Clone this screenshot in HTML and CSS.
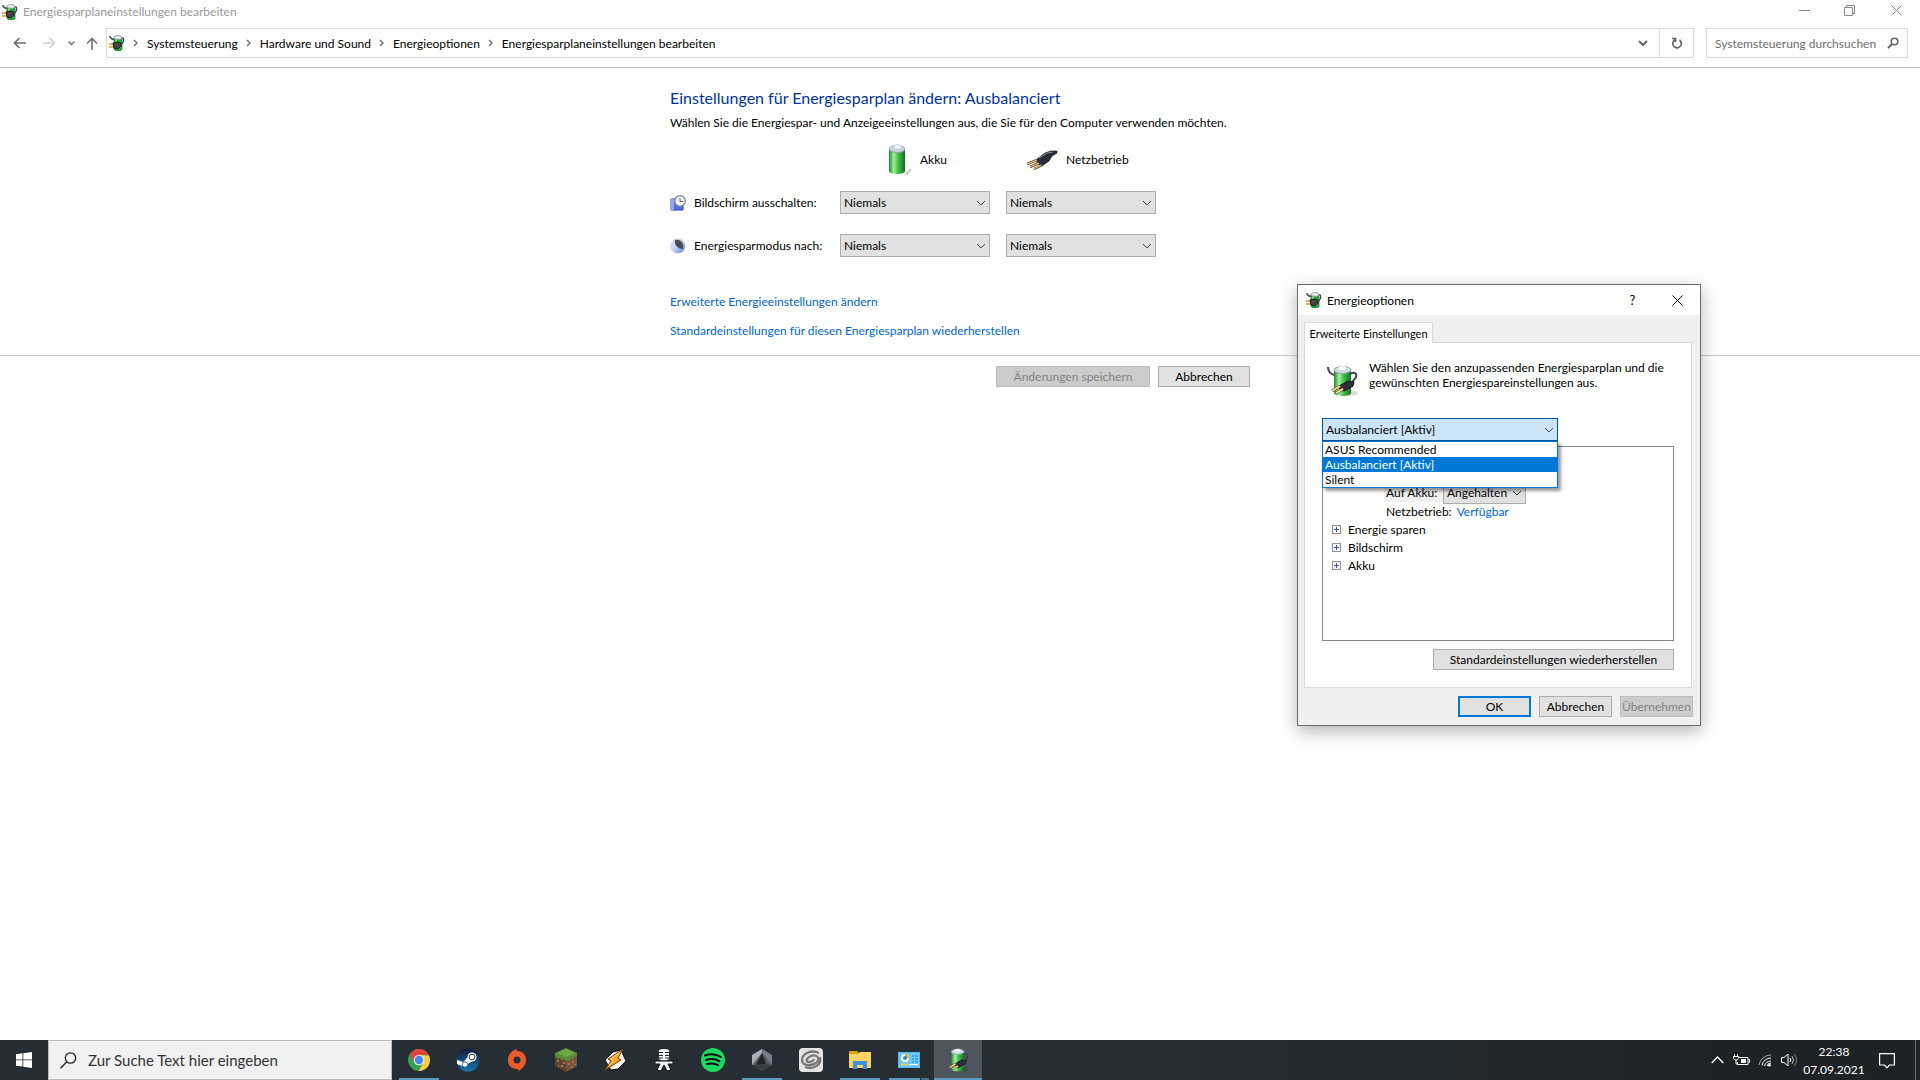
FILE: index.html
```
<!DOCTYPE html>
<html lang="de">
<head>
    <meta charset="UTF-8">
    <meta name="viewport" content="width=device-width, initial-scale=1.0">
    <title>Energiesparplaneinstellungen bearbeiten</title>
    <link rel="stylesheet" href="styles.css">
</head>
<body>
    <!-- Gemeinsame Symbole -->
    <svg class="sprite" aria-hidden="true">
        <defs>
            <linearGradient id="green" x1="0" x2="1" y1="0" y2="0">
                <stop offset="0" stop-color="#1c8a2c"/>
                <stop offset=".3" stop-color="#a5f0a0"/>
                <stop offset=".55" stop-color="#45c24d"/>
                <stop offset="1" stop-color="#157022"/>
            </linearGradient>
            <linearGradient id="moon" x1="0" x2="1" y1="0" y2="1">
                <stop offset="0" stop-color="#e8edf5"/>
                <stop offset=".5" stop-color="#c3d2ee"/>
                <stop offset="1" stop-color="#3f74d6"/>
            </linearGradient>
            <linearGradient id="steam-bg" x1="0" x2="0" y1="0" y2="1">
                <stop offset="0" stop-color="#101a38"/>
                <stop offset="1" stop-color="#1675b0"/>
            </linearGradient>
        </defs>
        <symbol id="i-power" viewBox="0 0 32 32">
            <ellipse cx="21" cy="28" rx="10" ry="3" fill="#000" opacity=".15"/>
            <path d="M23 9c5-3 7 0 6 3s-5 4-5 9" fill="none" stroke="#3b3b58" stroke-width="2"/>
            <path d="M1 2c0 5 3 7 6 8" fill="none" stroke="#4a4a60" stroke-width="2"/>
            <path d="M7 5v23c0 4 17 4 17 0V5z" fill="url(#green)"/>
            <ellipse cx="15.500" cy="5" rx="8.500" ry="3.500" fill="#cfdde4" stroke="#8ba0a8"/>
            <ellipse cx="15.500" cy="3" rx="4" ry="2" fill="#f5f8fb"/>
            <path d="M12 21l9-5 6 1-1 4-9 5-4-1z" fill="#2d2f3a" stroke="#14151c"/>
            <path d="M13 21l-8 5M16 24l-7 4" stroke="#7b5a25" stroke-width="3"/>
            <path d="M13 21l-8 5M16 24l-7 4" stroke="#f3dfa6" stroke-width="1.500"/>
        </symbol>
        <symbol id="i-power-small" viewBox="0 0 16 16">
            <path d="M11 3c4-1 4 1 3.500 3.500L12 10" fill="none" stroke="#44495a" stroke-width="1.300"/>
            <path d="M1 1c0 2 1 3 4 3.500" fill="none" stroke="#444" stroke-width="1.500"/>
            <path d="M5 3v11c0 2.500 8 2.500 8 0V3z" fill="#1fae35" stroke="#126b24" stroke-width=".7"/>
            <path d="M7 4v4" stroke="#90ee90" stroke-width="1.500"/>
            <ellipse cx="9" cy="2.500" rx="4" ry="2" fill="#e6ecf2" stroke="#7d8990" stroke-width=".8"/>
            <path d="M0 9h4M0 12h4" stroke="#e0a10c" stroke-width="1.500"/>
            <path d="M4 8l4-1 4 1v3l-3 3-4-1z" fill="#454545" stroke="#1a1a1a"/>
        </symbol>
        <symbol id="i-chevron" viewBox="0 0 10 6">
            <path d="M1 1l4 4 4-4" fill="none" stroke="currentColor"/>
        </symbol>
        <symbol id="i-crumb" viewBox="0 0 6 8">
            <path d="M1 1l3 3-3 3" fill="none" stroke="currentColor" stroke-width="1.500"/>
        </symbol>
        <symbol id="i-close" viewBox="0 0 11 11">
            <path d="M.5.5l10 10M10.500.5l-10 10" stroke="currentColor" fill="none"/>
        </symbol>
    </svg>

    <!-- Titelleiste -->
    <header class="titlebar">
        <svg class="icon16"><use href="#i-power-small"/></svg>
        <h1 class="window-title">Energiesparplaneinstellungen bearbeiten</h1>
        <div class="window-controls">
            <button class="control" aria-label="Minimieren"><svg width="11" height="11"><path d="M0 5.500h11" stroke="currentColor"/></svg></button>
            <button class="control" aria-label="Verkleinern"><svg width="11" height="11" fill="none" stroke="currentColor"><path d="M.5 2.500h8v8h-8zM2.500 2.500v-2h8v8h-2"/></svg></button>
            <button class="control" aria-label="Schließen"><svg width="11" height="11"><use href="#i-close"/></svg></button>
        </div>
    </header>

    <!-- Navigation -->
    <nav class="navbar">
        <div class="nav-buttons">
            <button class="nav-btn" aria-label="Zurück"><svg width="13" height="12" fill="none" stroke="#6b6b6b" stroke-width="1.700"><path d="M13 6H1.500M6.500 1l-5 5 5 5"/></svg></button>
            <button class="nav-btn" aria-label="Vorwärts" disabled><svg width="13" height="12" fill="none" stroke="#d4d4d4" stroke-width="1.700"><path d="M0 6h11.500M6.500 1l5 5-5 5"/></svg></button>
            <button class="nav-btn nav-history" aria-label="Verlauf"><svg width="7" height="5" fill="none" stroke="#777" stroke-width="1.500"><path d="M.5.5l3 3 3-3"/></svg></button>
            <button class="nav-btn nav-up" aria-label="Nach oben"><svg width="12" height="13" fill="none" stroke="#777" stroke-width="1.700"><path d="M6 13V1.500M1 6.500l5-5 5 5"/></svg></button>
        </div>
        <div class="address">
            <svg class="icon16"><use href="#i-power-small"/></svg>
            <svg class="crumb-arrow"><use href="#i-crumb"/></svg>
            <a href="#" class="crumb">Systemsteuerung</a>
            <svg class="crumb-arrow"><use href="#i-crumb"/></svg>
            <a href="#" class="crumb">Hardware und Sound</a>
            <svg class="crumb-arrow"><use href="#i-crumb"/></svg>
            <a href="#" class="crumb">Energieoptionen</a>
            <svg class="crumb-arrow"><use href="#i-crumb"/></svg>
            <a href="#" class="crumb">Energiesparplaneinstellungen bearbeiten</a>
            <button class="address-btn address-drop" aria-label="Vorherige Orte"><svg width="10" height="7" fill="none" stroke="#666" stroke-width="2"><path d="M1 1l4 4 4-4"/></svg></button>
            <button class="address-btn address-reload" aria-label="Aktualisieren"><svg width="12" height="12" fill="none" stroke="#666" stroke-width="1.700"><path d="M8.500 3A4.300 4.300 0 1 1 4 2.700M1 1.500h3.500v3.500"/></svg></button>
        </div>
        <div class="search">
            <input type="text" class="search-input" placeholder="Systemsteuerung durchsuchen" aria-label="Systemsteuerung durchsuchen">
            <svg width="12" height="12" fill="none" stroke="#666"><circle cx="7.500" cy="4.500" r="3.300" stroke-width="1.600"/><path d="M5 7l-4 4" stroke-width="2"/></svg>
        </div>
    </nav>

    <main class="content">
        <section class="plan">
            <h2 class="plan-title">Einstellungen für Energiesparplan ändern: Ausbalanciert</h2>
            <p class="plan-text">Wählen Sie die Energiespar- und Anzeigeeinstellungen aus, die Sie für den Computer verwenden möchten.</p>

            <div class="plan-grid">
                <div class="source source-battery">
                    <svg width="24" height="32" viewBox="0 0 24 32">
                        <path d="M16 30l7-6v3l-4 4z" fill="#000" opacity=".2"/>
                        <path d="M1 5v22c0 4 16 4 16 0V5z" fill="url(#green)"/>
                        <ellipse cx="9" cy="5" rx="8" ry="3.500" fill="#c8d3dc" stroke="#8b9aa3" stroke-width=".8"/>
                        <ellipse cx="9.500" cy="3" rx="4" ry="2.500" fill="#eef2f9" stroke="#a9b3c2" stroke-width=".5"/>
                    </svg>
                    <span>Akku</span>
                </div>
                <div class="source source-plug">
                    <svg width="32" height="20" viewBox="0 0 32 20">
                        <path d="M11 9l8-6 6-2 6 0v2l-5 3-3 5-7 5-5-3z" fill="#2b2d36" stroke="#17181e" stroke-width=".7"/>
                        <path d="M13 8l8-5 6-1" stroke="#8b8f9c" fill="none"/>
                        <path d="M11 10L1 14M13 13L4 17M16 15l-8 4" stroke="#6d4d26" stroke-width="2.500"/>
                        <path d="M11 10L1 14M13 13L4 17M15 15l-7 4" stroke="#efd49e"/>
                    </svg>
                    <span>Netzbetrieb</span>
                </div>

                <div class="setting">
                    <svg class="icon16" viewBox="0 0 16 16">
                        <path d="M1 4h12v11H1z" fill="#5370e0" stroke="#2c40b0"/>
                        <path d="M1 4h3v11H1z" fill="#92a8f4"/>
                        <circle cx="10" cy="6" r="5.300" fill="#f2f4f6" stroke="#7d858c" stroke-width="1.300"/>
                        <path d="M10 3v3.500h3" stroke="#4b5560" fill="none"/>
                    </svg>
                    <span>Bildschirm ausschalten:</span>
                </div>
                <div class="select">
                    <select aria-label="Bildschirm ausschalten, Akku"><option>Niemals</option></select>
                    <svg class="select-arrow"><use href="#i-chevron"/></svg>
                </div>
                <div class="select">
                    <select aria-label="Bildschirm ausschalten, Netzbetrieb"><option>Niemals</option></select>
                    <svg class="select-arrow"><use href="#i-chevron"/></svg>
                </div>

                <div class="setting">
                    <svg class="icon16" viewBox="0 0 16 16">
                        <circle cx="8" cy="8" r="7.300" fill="url(#moon)" stroke="#c5ccd8" stroke-width=".6"/>
                        <path d="M5 2c6-1 9 3 8 9C8 11 4 7 5 2z" fill="#474c58"/>
                    </svg>
                    <span>Energiesparmodus nach:</span>
                </div>
                <div class="select">
                    <select aria-label="Energiesparmodus nach, Akku"><option>Niemals</option></select>
                    <svg class="select-arrow"><use href="#i-chevron"/></svg>
                </div>
                <div class="select">
                    <select aria-label="Energiesparmodus nach, Netzbetrieb"><option>Niemals</option></select>
                    <svg class="select-arrow"><use href="#i-chevron"/></svg>
                </div>
            </div>

            <div class="plan-links">
                <a href="#">Erweiterte Energieeinstellungen ändern</a>
                <a href="#">Standardeinstellungen für diesen Energiesparplan wiederherstellen</a>
            </div>
        </section>

        <div class="actions">
            <div class="actions-inner">
                <button class="btn btn-save" disabled>Änderungen speichern</button>
                <button class="btn btn-cancel">Abbrechen</button>
            </div>
        </div>
    </main>

    <!-- Dialog Energieoptionen -->
    <div class="dialog" role="dialog" aria-labelledby="dialog-title">
        <div class="dialog-bar">
            <svg class="icon16"><use href="#i-power-small"/></svg>
            <h2 class="dialog-title" id="dialog-title">Energieoptionen</h2>
            <button class="dialog-control" aria-label="Hilfe">?</button>
            <button class="dialog-control" aria-label="Dialog schließen"><svg width="11" height="11"><use href="#i-close"/></svg></button>
        </div>
        <div class="dialog-body">
            <button class="tab">Erweiterte Einstellungen</button>
            <div class="panel">
                <div class="intro">
                    <svg width="32" height="32"><use href="#i-power"/></svg>
                    <p>Wählen Sie den anzupassenden Energiesparplan und die gewünschten Energiespareinstellungen aus.</p>
                </div>
                <div class="select combo">
                    <select aria-label="Energiesparplan"><option>Ausbalanciert [Aktiv]</option></select>
                    <svg class="select-arrow"><use href="#i-chevron"/></svg>
                    <ul class="combo-list" role="listbox">
                        <li role="option">ASUS Recommended</li>
                        <li role="option" class="selected" aria-selected="true">Ausbalanciert [Aktiv]</li>
                        <li role="option">Silent</li>
                    </ul>
                </div>
                <div class="tree">
                    <div class="tree-value">
                        <label class="tree-label" for="on-battery">Auf Akku:</label>
                        <div class="select select-small">
                            <select id="on-battery"><option>Angehalten</option></select>
                            <svg class="select-arrow"><use href="#i-chevron"/></svg>
                        </div>
                    </div>
                    <div class="tree-value tree-mains">Netzbetrieb: <a href="#">Verfügbar</a></div>
                    <ul class="tree-list">
                        <li><button class="expander" aria-label="Energie sparen aufklappen"></button>Energie sparen</li>
                        <li><button class="expander" aria-label="Bildschirm aufklappen"></button>Bildschirm</li>
                        <li><button class="expander" aria-label="Akku aufklappen"></button>Akku</li>
                    </ul>
                </div>
                <button class="btn btn-restore">Standardeinstellungen wiederherstellen</button>
            </div>
            <div class="dialog-actions">
                <button class="btn btn-default">OK</button>
                <button class="btn">Abbrechen</button>
                <button class="btn" disabled>Übernehmen</button>
            </div>
        </div>
    </div>

    <!-- Taskleiste -->
    <footer class="taskbar">
        <button class="start" aria-label="Start"><svg width="16" height="16" fill="#fff"><path d="M0 2.200L6.500 1.300v6.200H0zM7.300 1.200L16 0v7.500H7.300zM0 8.300h6.500v6.300L0 13.700zM7.300 8.300H16V16l-8.700-1.200z"/></svg></button>
        <div class="task-search">
            <svg width="17" height="17" fill="none" stroke="#222" stroke-width="1.300"><circle cx="10.500" cy="6" r="5.200"/><path d="M6.800 9.700L.5 16.300"/></svg>
            <input type="text" placeholder="Zur Suche Text hier eingeben" aria-label="Suche">
        </div>
        <div class="apps">
            <button class="app running" aria-label="Chrome">
                <svg width="24" height="24" viewBox="0 0 24 24"><circle cx="12" cy="12" r="11" fill="#34a053"/><path d="M2.500 6.500A11 11 0 0 1 21.500 6.500L22 7H12L7.700 14.500z" fill="#dc4437"/><path d="M22 7.500A11 11 0 0 1 11.500 23l5-8.500L12 7z" fill="#fdcb3e"/><circle cx="12" cy="12" r="5.300" fill="#f1f1f1"/><circle cx="12" cy="12" r="4.200" fill="#4487f4"/></svg>
            </button>
            <button class="app" aria-label="Steam">
                <svg width="24" height="24" viewBox="0 0 24 24"><circle cx="12" cy="12" r="11.500" fill="url(#steam-bg)"/><path d="M1 12l6 2 5-5 4 4-4 3-3 3-8-3z" fill="#fff"/><circle cx="16" cy="9" r="4.500" fill="#fff"/><circle cx="16" cy="9" r="2.900" fill="#fff" stroke="#234" stroke-width="1"/><circle cx="9" cy="16.500" r="2.700" fill="#fff" stroke="#1b4676" stroke-width=".8"/></svg>
            </button>
            <button class="app" aria-label="Origin">
                <svg width="24" height="24" viewBox="0 0 24 24"><path d="M13 0c-2 1-2 2-1 3 6 0 9 4 9 9 0 6-5 9-8 12 1-2 1-3-1-3-6 0-9-4-9-9 0-6 4-9 10-12zm-1 8.500a3.500 3.500 0 1 0 0 7 3.500 3.500 0 0 0 0-7z" fill="#ea5b2b" fill-rule="evenodd"/></svg>
            </button>
            <button class="app" aria-label="Minecraft">
                <svg width="24" height="24" viewBox="0 0 24 24"><path d="M1 5l11-5 11 5v13l-11 6-11-6z" fill="#60432d"/><path d="M12 11l11-6v13l-11 6z" fill="#7a5337"/><path d="M1 5l11-5 11 5v3l-3 1v2l-3-1v2l-5 1-3-2v2l-3-3-2 1-3-3z" fill="#568c36"/><path d="M3 5l9-4 9 4-9 4z" fill="#70a849"/><path d="M3 12h2v2H3zM7 17h2v2H7zM4 17h1v2H4zM9 14h2v2H9zM14 15h2v2h-2zM18 13h2v2h-2zM17 18h2v2h-2zM20 16h2v1h-2z" fill="#a77950"/></svg>
            </button>
            <button class="app" aria-label="Winamp">
                <svg width="24" height="24" viewBox="0 0 24 24"><path d="M10 4l8-2 5 11-8 8-7 1-6-10z" fill="#f5f5f5" stroke="#111"/><path d="M20 1L5 11l3 2-6 9 16-10-3-2z" fill="#f9a22b" stroke="#7a3c05"/><path d="M16 5L8 11l3 1-5 6" stroke="#ffe0a0" fill="none"/></svg>
            </button>
            <button class="app" aria-label="Mikrofon">
                <svg width="24" height="24" viewBox="0 0 24 24"><path d="M7 2q5-2 10 0v9q-5 3-10 0z" fill="#fff"/><path d="M7 4.500h4M13 4.500h4M7 7.500h4M13 7.500h4M7 10h4M13 10h4" stroke="#222b30"/><path d="M3 13h18v3h-5l3 6-4 1-3-6-3 6-4-1 3-6H3z" fill="#f2f2f2" stroke="#111"/></svg>
            </button>
            <button class="app" aria-label="Spotify">
                <svg width="24" height="24" viewBox="0 0 24 24"><circle cx="12" cy="12" r="12" fill="#1ed760"/><path d="M4 7.500c6-2 12-1 16 1.500M5 12c5-1.500 10-1 13.500 1.300M6 16c4-1 8-.7 11 1.200" fill="none" stroke="#111" stroke-width="2" stroke-linecap="round"/></svg>
            </button>
            <button class="app running" aria-label="Polygon">
                <svg width="24" height="24" viewBox="0 0 24 24"><path d="M12 1l10 6v10l-10 6-10-6V7z" fill="#555b65"/><path d="M12 1L2 7v10l10-12z" fill="#a9adb5"/><path d="M12 1l10 6v10l-9-11z" fill="#777c86"/><path d="M12 5L6 17l10-1z" fill="#20252b"/><path d="M2 17l4 0 10-1 6 1-10 6z" fill="#3b4049"/></svg>
            </button>
            <button class="app" aria-label="Spirale">
                <svg width="24" height="24" viewBox="0 0 24 24"><rect width="24" height="24" rx="4" fill="#e4e4e4"/><path d="M20 5C12 1 3 6 3 12c0 6 10 7 15 2 4-4-1-8-6-6s-6 6-2 6 5-3 5-3M21 9c2 8-7 13-15 10" fill="none" stroke="#777" stroke-width="2.300"/></svg>
            </button>
            <button class="app running" aria-label="Explorer">
                <svg width="24" height="24" viewBox="0 0 24 24"><path d="M1 3h8l2 2h12v15H1z" fill="#dba20b"/><path d="M1 6h9l2-2h11v16H1z" fill="#fcd462"/><path d="M5 13h14v8h-4v-4H9v4H5z" fill="#3d93db"/></svg>
            </button>
            <button class="app running grouped" aria-label="Systemsteuerung">
                <svg width="24" height="24" viewBox="0 0 24 24"><rect x="1.500" y="4.500" width="21" height="15" fill="#6fc8f4" stroke="#5cb8ea"/><circle cx="8" cy="10" r="4" fill="#fff"/><path d="M8 6v4h4A4 4 0 0 0 8 6z" fill="#f4a52a"/><circle cx="8" cy="10" r="2" fill="#2b8bd3"/><path d="M15 8h2M18 8h3M15 11h2M18 11h3M15 14h2M18 14h3" stroke="#2583c4"/><path d="M4 16.500h7" stroke="#f4d53a" stroke-width="1.500"/><path d="M12 16.500h9" stroke="#fff"/></svg>
            </button>
            <button class="app running active" aria-label="Energieoptionen">
                <svg width="24" height="24"><use href="#i-power"/></svg>
            </button>
        </div>
        <div class="tray">
            <button class="tray-btn" aria-label="Ausgeblendete Symbole"><svg width="13" height="8" fill="none" stroke="#fff" stroke-width="1.300"><path d="M.7 7l5.800-6 5.800 6"/></svg></button>
            <button class="tray-btn" aria-label="Akkustand"><svg width="17" height="14" fill="none" stroke="#fff"><path d="M6 4.500h9v7H4.500V9M15.500 6.500h1v3h-1M1.500 1v2M4.500 1v2M.5 3.500h5v2l-1.500 1.500h-2L.5 5.500zM3 7v4h2"/><path d="M8 6h5v4H8z" fill="#fff" stroke="none"/></svg></button>
            <button class="tray-btn" aria-label="WLAN"><svg width="14" height="14" fill="none" stroke="#fff"><path d="M1 12A12 12 0 0 1 13 2" opacity=".6"/><path d="M4 12.500A9 9 0 0 1 13 5M6.500 13A7 7 0 0 1 13 8M9 13a4 4 0 0 1 4-3"/><circle cx="11.500" cy="12.200" r="1.300" fill="#fff" stroke="none"/></svg></button>
            <button class="tray-btn" aria-label="Lautstärke"><svg width="17" height="14" fill="none" stroke="#fff"><path d="M.5 4.500h2.500l4-3.500v12l-4-3.500H.5z"/><path d="M9 5q1.500 2 0 4"/><path d="M11 3q3 4 0 8" opacity=".7"/><path d="M13.500 1q4 6 0 12" opacity=".4"/></svg></button>
            <div class="clock"><span>22:38</span><span>07.09.2021</span></div>
            <button class="tray-btn notify" aria-label="Benachrichtigungen"><svg width="16" height="16" fill="none" stroke="#fff" stroke-width="1.200"><path d="M.6.6h14.800v11.400h-5L8 14.800 5.500 12H.6z"/></svg></button>
            <div class="show-desktop"></div>
        </div>
    </footer>
</body>
</html>
```
FILE: styles.css
```
:root {
    --text: #000;
    --link: #0066cc;
    --accent: #0078d7;
    --control-bg: #e1e1e1;
    --control-border: #adadad;
    --line: #d9d9d9;
}

* {
    margin: 0;
    padding: 0;
    box-sizing: border-box;
}

body {
    display: flex;
    flex-direction: column;
    min-height: 100vh;
    font-family: "Segoe UI", Lato, "Open Sans", sans-serif;
    font-size: 12px;
    line-height: 15px;
    color: var(--text);
    background: #fff;
}

button,
input,
select {
    font: inherit;
    color: inherit;
    border: none;
    background: none;
}

a {
    color: var(--link);
    text-decoration: none;
}

ul {
    list-style: none;
}

svg {
    display: block;
    flex-shrink: 0;
}

.sprite {
    position: absolute;
    width: 0;
    height: 0;
}

.icon16 {
    width: 16px;
    height: 16px;
}

/* Titelleiste */
.titlebar {
    display: flex;
    align-items: center;
    gap: 5px;
    height: 23px;
    padding-left: 2px;
}

.window-title {
    font-size: 12px;
    font-weight: 400;
    color: #999;
}

.window-controls {
    display: flex;
    align-self: flex-start;
    margin-left: auto;
}

.control {
    display: flex;
    align-items: center;
    justify-content: center;
    width: 45px;
    height: 20px;
    color: #888;
}

.control:last-child {
    width: 48px;
}

/* Navigation */
.navbar {
    display: flex;
    align-items: center;
    height: 45px;
    padding: 0 12px 4px 7px;
    border-bottom: 1px solid #bcbfbf;
}

.nav-buttons {
    display: flex;
    align-items: center;
    width: 99px;
}

.nav-btn {
    display: flex;
    align-items: center;
    justify-content: center;
    width: 24px;
    height: 24px;
}

.nav-btn + .nav-btn {
    margin-left: 6px;
}

.nav-btn + .nav-history {
    width: 12px;
    margin-left: 4px;
}

.nav-btn + .nav-up {
    margin-left: 3px;
}

.address {
    display: flex;
    flex: 1;
    align-items: center;
    height: 30px;
    padding-left: 2px;
    border: 1px solid var(--line);
}

.crumb-arrow {
    width: 6px;
    height: 8px;
    margin: 0 8px;
    color: #777;
}

.crumb {
    color: var(--text);
}

.address-btn {
    display: flex;
    align-items: center;
    justify-content: center;
    width: 32px;
    height: 28px;
}

.address-drop {
    margin-left: auto;
}

.address-reload {
    width: 34px;
    border-left: 1px solid var(--line);
}

.search {
    display: flex;
    align-items: center;
    width: 202px;
    height: 30px;
    margin-left: 12px;
    padding: 0 8px;
    border: 1px solid var(--line);
}

.search-input {
    flex: 1;
    min-width: 0;
}

.search-input::placeholder {
    color: #6d6d6d;
}

/* Inhalt */
.content {
    flex: 1;
}

.plan {
    max-width: 580px;
    margin: 0 auto;
    padding: 20px 0 17px;
}

.plan-title {
    font-size: 16px;
    font-weight: 400;
    line-height: 20px;
    color: #003399;
}

.plan-text {
    margin-top: 7px;
    white-space: nowrap;
}

.plan-grid {
    display: grid;
    grid-template-columns: 154px 150px 150px;
    grid-template-rows: 23px 23px 23px;
    gap: 20px 16px;
    align-items: center;
    margin-top: 18px;
}

.source {
    display: flex;
    align-items: center;
    gap: 8px;
}

.source-battery {
    grid-column: 2;
    padding-left: 48px;
}

.source-plug {
    padding-left: 20px;
}

.setting {
    display: flex;
    align-items: center;
    gap: 8px;
    white-space: nowrap;
}

.select {
    position: relative;
}

.select select {
    width: 100%;
    height: 23px;
    padding: 0 16px 0 3px;
    border: 1px solid var(--control-border);
    background: var(--control-bg);
    appearance: none;
}

.select-arrow {
    position: absolute;
    top: 9px;
    right: 4px;
    width: 10px;
    height: 6px;
    color: #444;
    pointer-events: none;
}

.plan-links {
    display: grid;
    gap: 14px;
    margin-top: 37px;
}

.actions {
    padding-top: 10px;
    border-top: 1px solid #ccc;
}

.actions-inner {
    display: flex;
    justify-content: flex-end;
    gap: 8px;
    max-width: 580px;
    margin: 0 auto;
}

.btn {
    height: 21px;
    border: 1px solid var(--control-border);
    background: var(--control-bg);
    white-space: nowrap;
}

.btn:disabled {
    color: #838383;
    border-color: #bfbfbf;
    background: #ccc;
}

.btn-save {
    width: 154px;
}

.btn-cancel {
    width: 92px;
}

/* Dialog */
.dialog {
    position: absolute;
    top: 284px;
    left: 1297px;
    width: 404px;
    border: 1px solid #6b6b6b;
    background: #f0f0f0;
    box-shadow: 0 5px 16px rgba(0, 0, 0, 0.3);
}

.dialog-bar {
    display: flex;
    align-items: center;
    height: 30px;
    padding-left: 8px;
    background: #fff;
}

.dialog-title {
    flex: 1;
    margin-left: 5px;
    font-size: 12px;
    font-weight: 400;
}

.dialog-control {
    display: flex;
    align-items: center;
    justify-content: center;
    width: 45px;
    height: 30px;
    font-size: 13px;
}

.dialog-body {
    padding: 7px 7px 8px 6px;
}

.tab {
    position: relative;
    z-index: 1;
    display: block;
    width: 129px;
    height: 21px;
    border: 1px solid var(--line);
    border-bottom: none;
    background: #fff;
    font-size: 11px;
    white-space: nowrap;
}

.panel {
    margin: -1px 1px 0 0;
    padding: 17px;
    border: 1px solid var(--line);
    background: #fff;
}

.intro {
    display: flex;
    gap: 10px;
    padding-left: 5px;
}

.intro svg {
    margin-top: 5px;
}

.combo {
    width: 236px;
    margin-top: 21px;
}

.combo select {
    border-color: #005499;
    background: #cce4f7;
}

.combo-list {
    position: absolute;
    z-index: 2;
    top: 23px;
    left: 0;
    width: 236px;
    border: 1px solid var(--accent);
    background: #fff;
    box-shadow: 3px 3px 3px rgba(0, 0, 0, 0.4);
}

.combo-list li {
    padding: 0 2px;
}

.combo-list .selected {
    color: #fff;
    background: var(--accent);
}

.tree {
    height: 195px;
    margin-top: 5px;
    padding: 34px 8px 0;
    border: 1px solid #828790;
}

.tree-value {
    display: flex;
    padding-left: 53px;
}

.tree-label {
    width: 59px;
    height: 21px;
    padding: 4px 2px 0;
    background: #f0f0f0;
}

.select-small {
    width: 83px;
}

.tree-mains {
    gap: 5px;
    padding-left: 55px;
}

.tree-list {
    margin-top: 1px;
}

.tree-list li {
    display: flex;
    align-items: center;
    gap: 7px;
    height: 18px;
    padding-left: 1px;
}

.expander {
    width: 9px;
    height: 9px;
    border: 1px solid #919191;
    background:
        linear-gradient(#3a55a4, #3a55a4) center / 5px 1px no-repeat,
        linear-gradient(#3a55a4, #3a55a4) center / 1px 5px no-repeat,
        #f4f4f4;
}

.btn-restore {
    display: block;
    width: 241px;
    margin: 8px 0 0 auto;
}

.dialog-actions {
    display: flex;
    justify-content: flex-end;
    gap: 8px;
    margin-top: 8px;
}

.dialog-actions .btn {
    width: 73px;
}

.dialog-actions .btn-default {
    border: 2px solid var(--accent);
}

/* Taskleiste */
.taskbar {
    display: flex;
    height: 40px;
    color: #fff;
    background: linear-gradient(90deg, #252d34, #262e34 60%, #1d2225 90%);
}

.start {
    display: flex;
    align-items: center;
    justify-content: center;
    width: 48px;
}

.task-search {
    display: flex;
    align-items: center;
    gap: 11px;
    width: 344px;
    padding: 0 11px;
    border: 1px solid #bbb;
    background: #f1f1f1;
}

.task-search input {
    flex: 1;
    font-size: 15px;
}

.task-search input::placeholder {
    color: #333;
}

.apps {
    display: flex;
    gap: 1px;
    margin-left: 3px;
}

.app {
    display: flex;
    align-items: center;
    justify-content: center;
    width: 48px;
    background: linear-gradient(#5b9abf, #5b9abf) bottom / 0 2px no-repeat;
}

.app.running {
    background-size: 40px 2px;
}

.app.grouped {
    background: linear-gradient(90deg, #5b9abf 31px, #222 31px, #222 32px, #45708b 32px) bottom / 40px 2px no-repeat;
}

.app.active {
    background-color: #50575c;
    background-size: 48px 2px;
}

.tray {
    display: flex;
    align-items: center;
    margin-left: auto;
}

.tray-btn {
    display: flex;
    align-items: center;
    justify-content: center;
    width: 24px;
    height: 40px;
}

.clock {
    display: flex;
    flex-direction: column;
    align-items: center;
    gap: 3px;
    width: 66px;
}

.notify {
    width: 40px;
    padding-top: 2px;
}

.show-desktop {
    width: 5px;
    height: 40px;
    margin-left: 8px;
    border-left: 1px solid #6d7274;
}
```
